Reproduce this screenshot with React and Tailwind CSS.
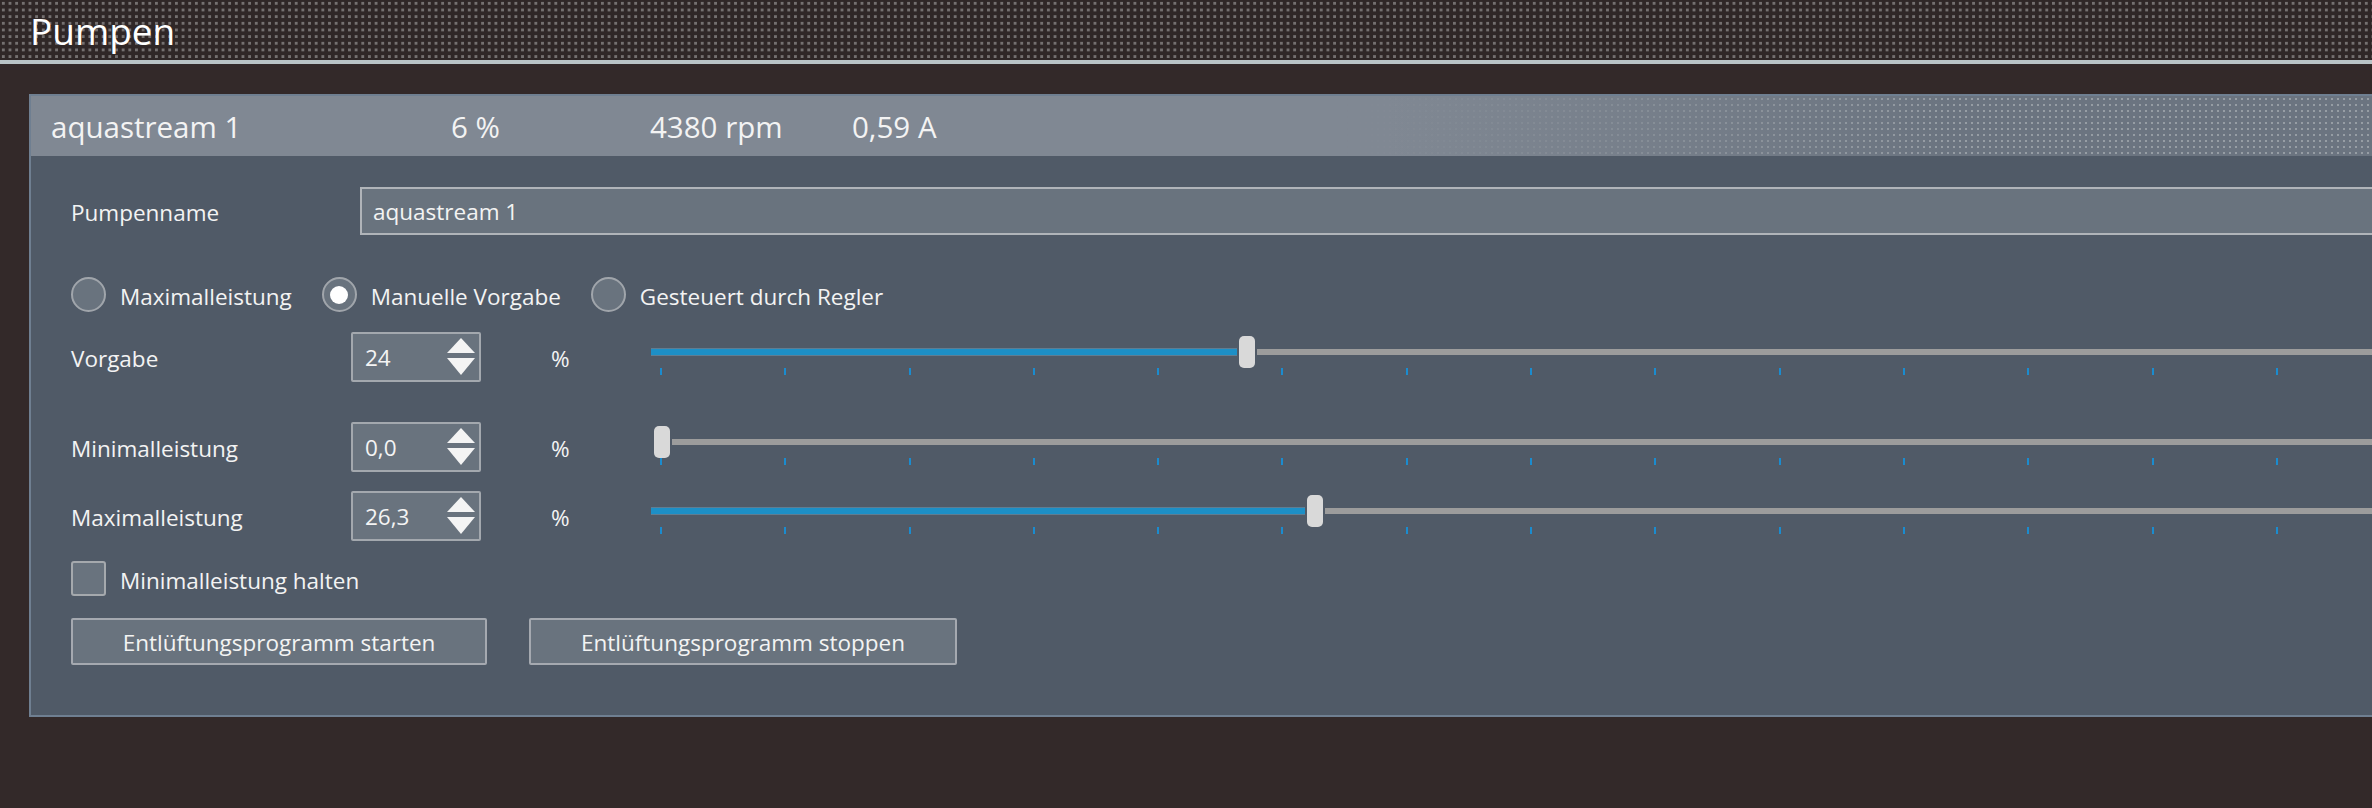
import React from "react";

const ticks = Array.from({ length: 14 });

function Spin({ value }) {
  return (
    <div className="flex h-[50px] w-[130px] shrink-0 items-center justify-between rounded-[2px] border-2 border-[#a3a8ae] bg-[#69737e] pl-[12px] pr-[4px]">
      <span className="pt-[2px] text-[22.5px] leading-none text-[#f4f4f4]">{value}</span>
      <svg width="28" height="38" viewBox="0 0 28 38">
        <polygon points="14,0 28,15 0,15" fill="#f4f4f4" />
        <polygon points="0,20 28,20 14,37" fill="#f4f4f4" />
      </svg>
    </div>
  );
}

function Slider({ fill }) {
  return (
    <div className="mt-[4px] flex min-w-0 flex-1 flex-col overflow-hidden">
      <div className="flex h-[32px] items-center">
        {fill > 0 ? (
          <div className="h-[8px] shrink-0 border-y border-[#5f7d92] bg-[#1d8fc6]" style={{ width: fill }} />
        ) : (
          <div className="w-[1px] shrink-0" />
        )}
        <div className="ml-[2px] h-[32px] w-[16px] shrink-0 rounded-[5px] bg-[#d9d9d9]" />
        <div className="ml-[2px] h-[6px] flex-1 bg-[#9c9c9c]" />
      </div>
      <div className="flex gap-[122.3px] pl-[9px]">
        {ticks.map((_, i) => (
          <div key={i} className="h-[7px] w-[2px] shrink-0 bg-[#1a8ccf]" />
        ))}
      </div>
    </div>
  );
}

function SliderRow({ label, value, fill, className }) {
  return (
    <div className={"flex items-start " + className}>
      <div className="flex h-[50px] w-[280px] shrink-0 items-center pt-[3px] text-[22.5px]">{label}</div>
      <Spin value={value} />
      <div className="flex h-[50px] w-[170px] shrink-0 items-center pl-[70px] pt-[3px] text-[22.5px]">%</div>
      <Slider fill={fill} />
    </div>
  );
}

function Radio({ label, checked }) {
  return (
    <div className="flex items-center gap-[14px]">
      <div className="flex h-[35px] w-[35px] items-center justify-center rounded-full border-2 border-[#a0a5ab] bg-[#69737e]">
        {checked && <div className="h-[18px] w-[18px] rounded-full bg-white" />}
      </div>
      <span className="translate-y-[1.5px] text-[22.5px] leading-[30px]">{label}</span>
    </div>
  );
}

export default function App() {
  return (
    <div className="h-[808px] w-[2372px] overflow-hidden bg-[#332929] font-['Open_Sans',sans-serif] text-[#f3f3f3]">
      <div className="flex h-[60px] items-center bg-[#2f2727] bg-[radial-gradient(circle,#747070_1.5px,transparent_1.9px)] bg-[size:6.67px_6.67px] pl-[30px]">
        <span className="text-[37px] leading-none text-white">Pumpen</span>
      </div>
      <div className="h-[4px] bg-[#b9c3c6]" />

      <div className="ml-[29px] mt-[30px] border-b-2 border-l-2 border-t-2 border-[#6f7f91]">
        <div className="relative flex h-[60px] items-center bg-[linear-gradient(to_right,#808893_58%,#6b7480_82%)] pl-[20px] pt-[2px] text-[29.5px]">
          <div className="absolute inset-0 bg-[radial-gradient(circle,#969da4_1px,transparent_1.4px)] bg-[size:6px_6px] [mask-image:linear-gradient(to_right,transparent_56%,black_82%)]" />
          <span className="relative w-[400px]">aquastream 1</span>
          <span className="relative w-[199px]">6 %</span>
          <span className="relative w-[202px]">4380 rpm</span>
          <span className="relative">0,59 A</span>
        </div>

        <div className="bg-[#505a67] pb-[50px] pl-[40px] pt-[31px]">
          <div className="flex items-center">
            <div className="w-[289px] shrink-0 translate-y-[1.5px] text-[22.5px]">Pumpenname</div>
            <div className="flex h-[48px] flex-1 items-center border-y-2 border-l-2 border-[#b0b4b9] bg-[#69737e] pl-[11px] pt-[2px] text-[22.5px]">
              aquastream 1
            </div>
          </div>

          <div className="mt-[42px] flex items-center gap-[30px]">
            <Radio label="Maximalleistung" />
            <Radio label="Manuelle Vorgabe" checked />
            <Radio label="Gesteuert durch Regler" />
          </div>

          <SliderRow className="mt-[20px]" label="Vorgabe" value="24" fill={586} />
          <SliderRow className="mt-[40px]" label="Minimalleistung" value="0,0" fill={0} />
          <SliderRow className="mt-[19px]" label="Maximalleistung" value="26,3" fill={654} />

          <div className="mt-[20px] flex items-center gap-[14px]">
            <div className="h-[35px] w-[35px] rounded-[3px] border-2 border-[#a5a9ad] bg-[#69737e]" />
            <span className="translate-y-[1.5px] text-[22.5px] leading-[30px]">Minimalleistung halten</span>
          </div>

          <div className="mt-[22px] flex gap-[42px]">
            <button className="h-[47px] w-[416px] rounded-[2px] border-2 border-[#a5a9b0] bg-[#69737e] pt-[2px] text-[22.5px] text-[#f3f3f3]">
              Entlüftungsprogramm starten
            </button>
            <button className="h-[47px] w-[428px] rounded-[2px] border-2 border-[#a5a9b0] bg-[#69737e] pt-[2px] text-[22.5px] text-[#f3f3f3]">
              Entlüftungsprogramm stoppen
            </button>
          </div>
        </div>
      </div>
    </div>
  );
}
